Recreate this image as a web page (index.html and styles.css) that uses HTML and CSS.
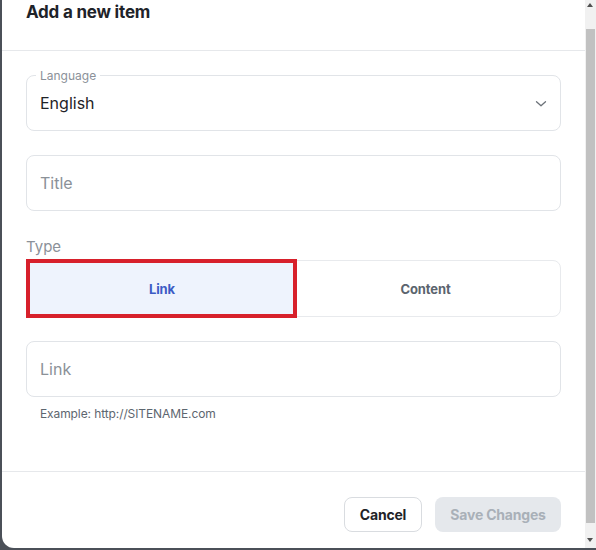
FILE: index.html
```html
<!DOCTYPE html>
<html lang="en">
<head>
<meta charset="utf-8">
<title>Add a new item</title>
<link rel="stylesheet" href="styles.css">
</head>
<body>
<div class="screen">
  <div class="edge"></div>
  <div class="dialog">
    <div class="dialog-header">
      <h2 class="dialog-title">Add a new item</h2>
    </div>
    <div class="dialog-body">
      <div class="field select-field">
        <span class="legend">Language</span>
        <span class="value">English</span>
        <svg class="chevron" width="12" height="8" viewBox="0 0 12 8"><path d="M1.5 1.8 L6 5.8 L10.5 1.8" fill="none" stroke="#6b7178" stroke-width="1.3" stroke-linecap="round" stroke-linejoin="round"/></svg>
      </div>
      <div class="field"><span class="placeholder">Title</span></div>
      <div class="type-label">Type</div>
      <div class="toggle">
        <div class="toggle-btn active">Link</div>
        <div class="toggle-btn">Content</div>
        <div class="highlight"></div>
      </div>
      <div class="field link-field"><span class="placeholder">Link</span></div>
      <div class="helper">Example: http://SITENAME.com</div>
    </div>
    <div class="dialog-footer">
      <button class="btn btn-outline">Cancel</button>
      <button class="btn btn-disabled">Save Changes</button>
    </div>
  </div>
  <div class="scrollbar">
    <div class="arrow up"></div>
    <div class="thumb"></div>
    <div class="arrow down"></div>
  </div>
</div>
</body>
</html>
```

FILE: styles.css
```css
* { box-sizing: border-box; }
html, body { margin: 0; padding: 0; }
body {
  width: 596px;
  height: 550px;
  overflow: hidden;
  background: #4b5058;
  font-family: "Inter", "Roboto", "Liberation Sans", sans-serif;
}
.screen {
  display: flex;
  height: 548px;
}
.edge { width: 2px; background: #4b5058; }
.dialog {
  width: 583px;
  background: #fff;
  border-bottom-left-radius: 12px;
  display: flex;
  flex-direction: column;
}
.dialog-header {
  height: 51px;
  border-bottom: 1px solid #e6e8eb;
  padding: 0 24px;
}
.dialog-title {
  margin: 0;
  font-size: 17px;
  line-height: 25px;
  font-weight: 700;
  color: #1e2329;
  letter-spacing: -0.2px;
}
.dialog-body {
  flex: 1;
  padding: 24px 24px 0;
  display: flex;
  flex-direction: column;
}
.field {
  position: relative;
  height: 56px;
  border: 1px solid #e1e4e8;
  border-radius: 8px;
  padding: 0 13px;
  display: flex;
  align-items: center;
  font-size: 16px;
  margin-bottom: 24px;
}
.select-field .value { color: #1f2328; }
.legend {
  position: absolute;
  left: 9px;
  top: -8px;
  padding: 0 4px;
  background: #fff;
  font-size: 12px;
  line-height: 15px;
  color: #8b9199;
}
.chevron { position: absolute; right: 13px; top: 24px; }
.placeholder { color: #8b9198; }
.type-label {
  margin-top: 2px;
  font-size: 15px;
  line-height: 20px;
  color: #8b9199;
}
.toggle {
  position: relative;
  margin-top: 3px;
  height: 57px;
  display: flex;
  border: 1px solid #e8eaed;
  border-radius: 8px;
  margin-bottom: 24px;
}
.toggle-btn {
  flex: 1;
  display: flex;
  align-items: center;
  justify-content: center;
  font-size: 13px;
  font-weight: 700;
  color: #5b646e;
  letter-spacing: -0.1px;
  padding-right: 6px;
}
.toggle-btn.active {
  flex: 0 0 270px;
  background: #eef3fd;
  color: #3c5bc5;
  border-radius: 7px 0 0 7px;
  padding-right: 0;
}
.highlight {
  position: absolute;
  left: -1px;
  top: -2px;
  width: 271px;
  height: 59px;
  border: 4px solid #d7202b;
}
.link-field { margin-bottom: 0; }
.helper {
  margin-top: 9px;
  padding-left: 14px;
  font-size: 12px;
  line-height: 16px;
  color: #5d666f;
  letter-spacing: -0.1px;
}
.dialog-footer {
  height: 77px;
  border-top: 1px solid #e6e8eb;
  padding: 25px 24px 0;
  display: flex;
  justify-content: flex-end;
  align-items: flex-start;
  gap: 13px;
}
.btn {
  height: 35px;
  border-radius: 8px;
  font-family: inherit;
  font-size: 14px;
  font-weight: 700;
  letter-spacing: -0.2px;
  padding: 0;
  cursor: pointer;
}
.btn-outline {
  width: 78px;
  background: #fff;
  border: 1px solid #d9dce0;
  color: #1f2328;
}
.btn-disabled {
  width: 126px;
  background: #e5e8ec;
  border: none;
  color: #a9b0b8;
}
.scrollbar {
  width: 11px;
  background: #f1f1f1;
  position: relative;
}
.thumb {
  position: absolute;
  left: 1px;
  right: 1px;
  top: 29px;
  height: 494px;
  background: #c1c1c1;
}
.arrow {
  position: absolute;
  left: 2px;
  width: 0;
  height: 0;
  border-left: 3.5px solid transparent;
  border-right: 3.5px solid transparent;
}
.arrow.up { top: 3px; border-bottom: 4px solid #505050; }
.arrow.down { bottom: 6px; border-top: 4px solid #505050; }
```
